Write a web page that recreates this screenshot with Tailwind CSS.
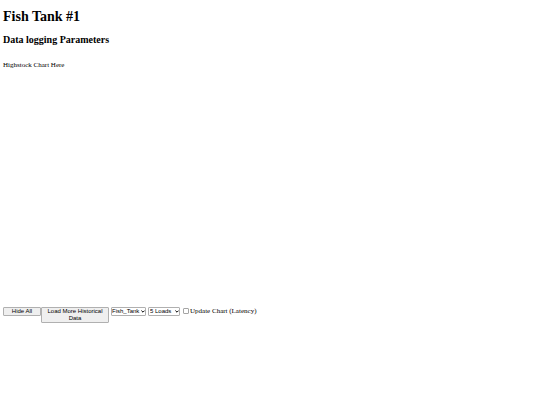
<!DOCTYPE html>
<html lang="en">
<head>
    <meta charset="UTF-8">
    <meta name="viewport" content="width=device-width, initial-scale=1.0">
    <title>Fish Tank #1</title>
    <script src="https://cdn.jsdelivr.net/npm/@tailwindcss/browser@4"></script>
</head>
<body class="bg-white text-black font-['Liberation_Serif',serif] text-[7px] leading-[8px]">
    <main class="px-[3px] pt-2">
        <h1 class="text-[14px] leading-[17px] font-bold">Fish Tank #1</h1>
        <h2 class="mt-2 text-[10px] leading-[13px] font-bold">Data logging Parameters</h2>

        <!-- Chart container -->
        <div id="chart" class="mt-[15px] h-[246px]">Highstock Chart Here</div>

        <!-- Chart controls -->
        <div class="flex items-start font-['Liberation_Sans',sans-serif] text-[6px] leading-[7px]">
            <button type="button" id="hideAll" class="w-[38px] h-[9px] rounded-[1px] border border-[#b0b0b0] bg-[#efefef] text-center">Hide All</button>
            <button type="button" id="loadMore" class="w-[68px] rounded-[1px] border border-[#b0b0b0] bg-[#efefef] px-1 text-center">Load More Historical Data</button>

            <div class="relative ml-[2px]">
                <select id="tank" aria-label="Tank" class="block w-[35px] h-[9px] appearance-none rounded-[1px] border border-[#b0b0b0] bg-white">
                    <option>Fish_Tank</option>
                </select>
                <svg class="pointer-events-none absolute right-px top-[3px] w-1 h-[3px]" viewBox="0 0 4 3" fill="none" stroke="black"><path d="M0.4 0.6L2 2.2L3.6 0.6"/></svg>
            </div>
            <div class="relative ml-[2px]">
                <select id="loads" aria-label="Loads" class="block w-[32px] h-[9px] appearance-none rounded-[1px] border border-[#b0b0b0] bg-white pl-px">
                    <option>5 Loads</option>
                </select>
                <svg class="pointer-events-none absolute right-px top-[3px] w-1 h-[3px]" viewBox="0 0 4 3" fill="none" stroke="black"><path d="M0.4 0.6L2 2.2L3.6 0.6"/></svg>
            </div>

            <input type="checkbox" id="update" class="ml-[3px] mt-px size-[6px] appearance-none rounded-[1px] border border-[#a5a5a5] bg-white checked:bg-blue-600">
            <label for="update" class="ml-px font-['Liberation_Serif',serif] text-[7px] leading-[8px]">Update Chart (Latency)</label>
        </div>
    </main>
</body>
</html>
